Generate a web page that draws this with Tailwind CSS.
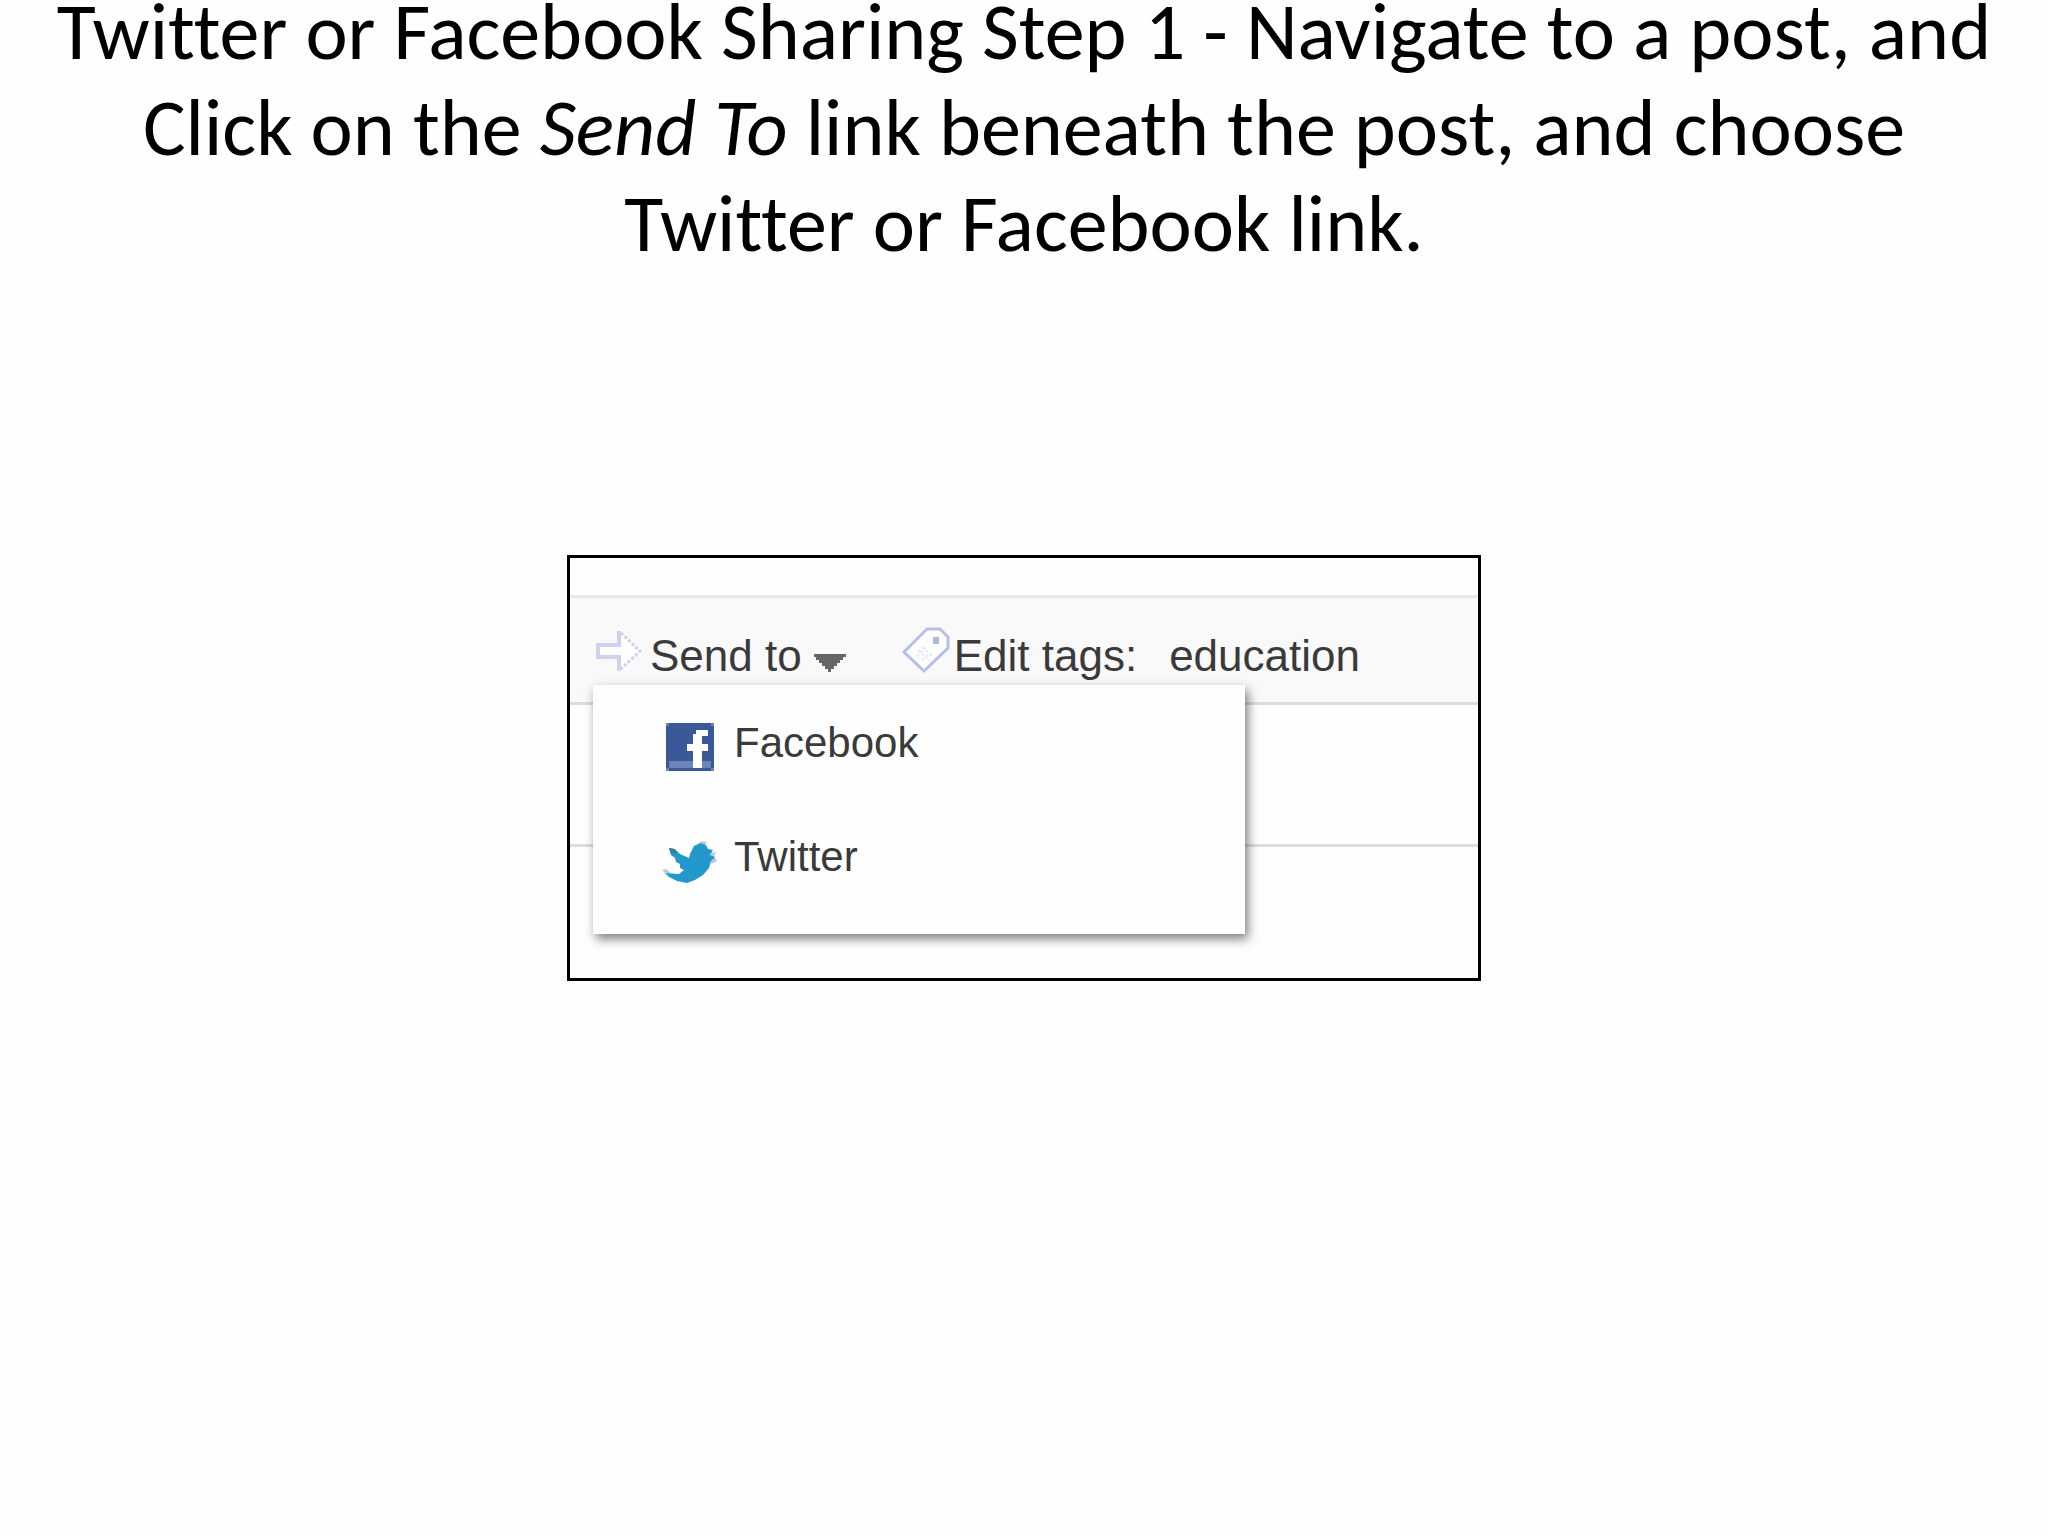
<!doctype html>
<html lang="en">
  <head>
    <meta charset="UTF-8" />
    <meta name="viewport" content="width=device-width, initial-scale=1.0" />
    <title>Twitter or Facebook Sharing Step 1</title>
    <script src="https://cdn.jsdelivr.net/npm/@tailwindcss/browser@4"></script>
  </head>
  <body class="bg-[#fefefe]">
    <main class="flex min-h-screen flex-col items-center">
      <h1
        class="-mt-4 text-center font-[Carlito,Lato,sans-serif] text-[80px] leading-[96px] text-black [font-variant-ligatures:none]"
      >
        Twitter or Facebook Sharing Step 1 - Navigate to a post, and<br />
        Click on the <em>Send To</em> link beneath the post, and choose<br />
        Twitter or Facebook link.
      </h1>

      <section
        class="relative mt-[283px] w-full max-w-[914px] border-3 border-black bg-[#fefefe] pt-[37px] pb-[131px] font-['Liberation_Sans',Arial,sans-serif] text-[#3a3a3a]"
      >
        <div
          class="flex h-[110px] items-start border-y-3 border-t-[#e8e8e9] border-b-[#dcdcde] bg-[#f9f9fa] pt-7 pl-[26px] text-[44px] leading-[60px]"
        >
          <button type="button" class="flex items-start" aria-haspopup="true">
            <svg class="mt-1 mr-2 h-[42px] w-[46px]" viewBox="0 0 46 42" fill="none">
              <path d="M2 15H23V2L44 21L23 40V27H2Z" fill="#fefefe" />
              <path d="M23 1V15H2V27H23V41" stroke="#cdd3ee" stroke-width="4" />
              <path d="M25 3L44 21L25 39" stroke="#cdd3ee" stroke-width="3" stroke-dasharray="3 2" />
            </svg>
            <span>Send to</span>
            <svg class="mt-7 ml-3 h-[18px] w-8" viewBox="0 0 32 18" fill="#666" shape-rendering="crispEdges">
              <path d="M0 0H32V3H29V6H26V9H23V12H20V15H17V18H14V15H11V12H8V9H5V6H2V3H0Z" />
            </svg>
          </button>
          <a href="#" class="ml-14 flex items-start">
            <svg class="mr-1 h-12 w-12" viewBox="0 0 48 48" fill="none">
              <path d="M2 26L25 3H38L46 11V22L22 45Z" fill="#fefefe" stroke="#b3c2e2" stroke-width="3" />
              <path d="M31 11H37V18H31Z" fill="#a9bbdf" />
              <path d="M16 24L28 35M20 21L31 31M15 30L23 22M20 34L27 27" stroke="#e6e9f3" stroke-width="2" stroke-dasharray="3 2" />
            </svg>
            <span>Edit tags:</span>
          </a>
          <a href="#" class="ml-8">education</a>
        </div>
        <div class="h-[142px] border-b-3 border-[#dcdcde]"></div>

        <ul
          class="absolute top-[127px] left-[23px] flex h-[249px] w-[652px] flex-col gap-[62px] bg-[#fefefe] pt-[34px] pl-[69px] text-[42px] leading-12 shadow-[3px_5px_10px_rgba(0,0,0,0.5)]"
        >
          <li>
            <a href="#" class="flex items-start">
              <svg class="mt-1 mr-5 ml-1 h-12 w-12" viewBox="0 0 48 48" shape-rendering="crispEdges">
                <path d="M0 0H48V48H0Z" fill="#3b5998" />
                <path d="M3 38H45V45H3Z" fill="#6d84b8" />
                <path d="M27 45V28H21V21H27V11H30V7H42V13H36V21H42V28H36V45Z" fill="#fefefe" />
                <path d="M0 0H3V3H0ZM45 0H48V3H45ZM0 45H3V48H0ZM45 45H48V48H45Z" fill="#6d84b8" />
              </svg>
              Facebook
            </a>
          </li>
          <li>
            <a href="#" class="flex items-start">
              <svg class="mt-2 mr-[17px] h-[42px] w-[55px]" viewBox="0 0 55 42">
                <path d="M37 2L40 0L45 1L43 4ZM49 12L54 11L52 15L55 20L49 23ZM0 29L4 28L9 32L4 33Z" fill="#bccbd2" />
                <path d="M3 32L17 33L22 29L18 27V23L14 21L13 17L9 14L7 7L13 8L18 13L27 17L28 13L32 5L38 2L44 4L46 8L51 9L48 14L53 16L49 20L47 27L41 34L33 39L25 42L15 40L7 36Z" fill="#2298cc" />
                <path d="M7 7L12 8L15 12L9 12Z" fill="#347d93" />
              </svg>
              Twitter
            </a>
          </li>
        </ul>
      </section>
    </main>
  </body>
</html>
